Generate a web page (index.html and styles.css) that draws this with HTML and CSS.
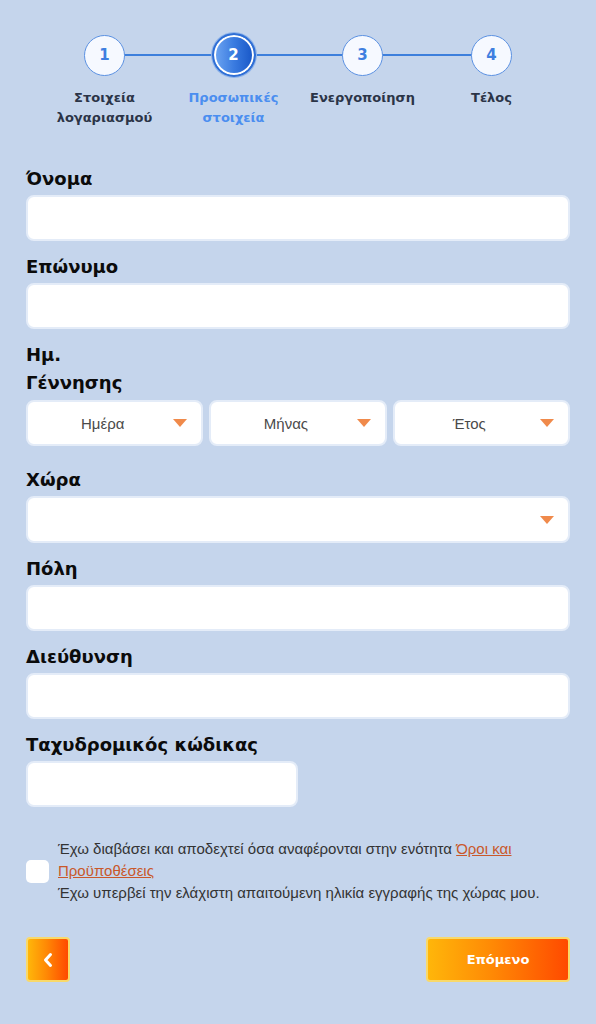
FILE: index.html
```html
<!DOCTYPE html>
<html lang="el">
<head>
<meta charset="utf-8">
<link rel="stylesheet" href="styles.css">
</head>
<body>
<div class="page">
  <div class="stepper">
    <div class="step done">
      <div class="circle-wrap"><div class="circle">1</div></div>
      <div class="step-label">Στοιχεία λογαριασμού</div>
    </div>
    <div class="step active">
      <div class="circle-wrap"><div class="circle">2</div></div>
      <div class="step-label">Προσωπικές στοιχεία</div>
    </div>
    <div class="step">
      <div class="circle-wrap"><div class="circle">3</div></div>
      <div class="step-label">Ενεργοποίηση</div>
    </div>
    <div class="step">
      <div class="circle-wrap"><div class="circle">4</div></div>
      <div class="step-label">Τέλος</div>
    </div>
  </div>

  <form class="form">
    <div class="field">
      <label class="label">Όνομα</label>
      <div class="input"></div>
    </div>
    <div class="field">
      <label class="label">Επώνυμο</label>
      <div class="input"></div>
    </div>
    <div class="field field-date">
      <label class="label label-narrow">Ημ. Γέννησης</label>
      <div class="date-row">
        <div class="input select"><span class="sel-text">Ημέρα</span><span class="arrow"></span></div>
        <div class="input select"><span class="sel-text">Μήνας</span><span class="arrow"></span></div>
        <div class="input select"><span class="sel-text">Έτος</span><span class="arrow"></span></div>
      </div>
    </div>
    <div class="field">
      <label class="label">Χώρα</label>
      <div class="input select wide"><span class="sel-text"></span><span class="arrow"></span></div>
    </div>
    <div class="field">
      <label class="label">Πόλη</label>
      <div class="input"></div>
    </div>
    <div class="field">
      <label class="label">Διεύθυνση</label>
      <div class="input"></div>
    </div>
    <div class="field">
      <label class="label">Ταχυδρομικός κώδικας</label>
      <div class="input half"></div>
    </div>

    <div class="terms">
      <div class="checkbox"></div>
      <div class="terms-text">
        <p class="terms-line">Έχω διαβάσει και αποδεχτεί όσα αναφέρονται στην ενότητα <a class="link" href="#">Όροι και Προϋποθέσεις</a></p>
        <p class="terms-line">Έχω υπερβεί την ελάχιστη απαιτούμενη ηλικία εγγραφής της χώρας μου.</p>
      </div>
    </div>

    <div class="actions">
      <button type="button" class="btn btn-back">
        <svg width="12" height="16" viewBox="0 0 12 16"><path d="M8.5 2.5 L3.5 8 L8.5 13.5" fill="none" stroke="#fff" stroke-width="3" stroke-linecap="round" stroke-linejoin="round"/></svg>
      </button>
      <button type="button" class="btn btn-next">Επόμενο</button>
    </div>
  </form>
</div>
</body>
</html>
```

FILE: styles.css
```css
html, body {
  margin: 0;
  padding: 0;
  background: #c5d5ec;
}
body {
  font-family: "DejaVu Sans", Verdana, sans-serif;
  color: #111;
}
.page {
  padding: 32px 26px 0 26px;
}

/* Stepper */
.stepper {
  display: flex;
  padding: 0 14px;
}
.step {
  flex: 1;
  position: relative;
  display: flex;
  flex-direction: column;
  align-items: center;
}
.step:not(:last-child)::after {
  content: "";
  position: absolute;
  top: 22px;
  left: 50%;
  width: 100%;
  height: 2px;
  background: #3d7fdc;
  z-index: 0;
}
.circle-wrap {
  height: 46px;
  display: flex;
  align-items: center;
  justify-content: center;
  position: relative;
  z-index: 1;
}
.circle {
  width: 39px;
  height: 39px;
  border-radius: 50%;
  border: 1.5px solid #5b91e2;
  background: #f6f9ff;
  color: #3f7fe0;
  font-weight: bold;
  font-size: 15px;
  display: flex;
  align-items: center;
  justify-content: center;
}
.step.active .circle {
  width: 40px;
  height: 40px;
  border: 2px solid #2f6fd6;
  box-shadow: 0 0 0 2px #ffffff inset, 0 0 0 1px #8fb4ea;
  background: linear-gradient(90deg, #6ea6f2 0%, #3a7be0 50%, #1655c6 100%);
  color: #ffffff;
}
.step-label {
  margin-top: 10px;
  font-size: 13px;
  line-height: 20px;
  font-weight: bold;
  color: #2b3447;
  text-align: center;
  max-width: 110px;
}
.step.active .step-label {
  color: #4b8ef0;
}

/* Form */
.form {
  margin-top: 37px;
}
.field {
  margin-bottom: 12px;
}
.label {
  display: block;
  font-size: 18px;
  line-height: 28px;
  font-weight: bold;
  color: #0b0b0b;
  margin-bottom: 2px;
}
.label-narrow {
  max-width: 100px;
  margin-bottom: 3px;
}
.field-date {
  margin-bottom: 20px;
}
.input {
  box-sizing: border-box;
  height: 46px;
  background: #ffffff;
  border: 2px solid #e4ecf8;
  border-radius: 8px;
}
.input.half {
  width: 50%;
}
.date-row {
  display: grid;
  grid-template-columns: 1fr 1fr 1fr;
  gap: 6px;
}
.select {
  display: flex;
  align-items: center;
  padding: 0 14px 0 4px;
}
.select.wide {
  height: 47px;
}
.sel-text {
  flex: 1;
  text-align: center;
  font-family: "Liberation Sans", Arial, sans-serif;
  font-size: 15px;
  color: #4a4a4a;
}
.arrow {
  width: 0;
  height: 0;
  border-left: 7px solid transparent;
  border-right: 7px solid transparent;
  border-top: 8px solid #f08a4b;
}

/* Terms */
.terms {
  display: flex;
  align-items: center;
  margin-top: 31px;
}
.checkbox {
  width: 23px;
  height: 23px;
  background: #fff;
  border-radius: 5px;
  flex: none;
  margin-right: 9px;
}
.terms-text {
  font-family: "Liberation Sans", Arial, sans-serif;
  font-size: 15px;
  line-height: 22px;
  color: #333;
}
.terms-line {
  margin: 0;
}
.link {
  color: #c9582a;
  text-decoration: underline;
}

/* Buttons */
.actions {
  display: flex;
  justify-content: space-between;
  margin-top: 33px;
}
.btn {
  height: 45px;
  border: 2px solid #f9d96a;
  border-radius: 4px;
  background: linear-gradient(90deg, #ffb60a 0%, #ff8a05 45%, #ff4a00 100%);
  color: #fff;
  font-family: "DejaVu Sans", Verdana, sans-serif;
  font-weight: bold;
  font-size: 13px;
  cursor: pointer;
  display: flex;
  align-items: center;
  justify-content: center;
  padding: 0;
}
.btn-back {
  width: 44px;
}
.btn-next {
  width: 144px;
}
```
